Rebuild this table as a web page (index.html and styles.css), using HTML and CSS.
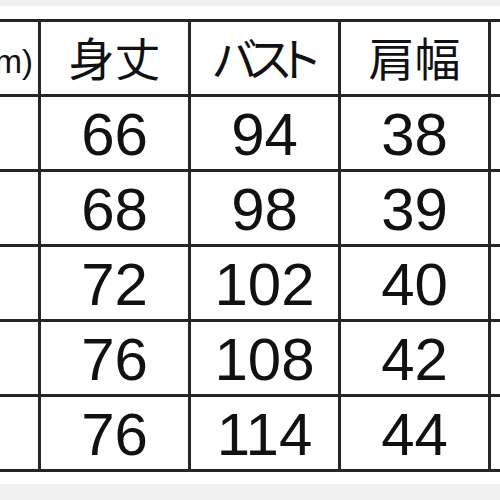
FILE: index.html
```html
<!DOCTYPE html>
<html lang="ja">
<head>
<meta charset="utf-8">
<link rel="stylesheet" href="styles.css">
</head>
<body>
<div class="band-top"></div>
<div class="sheet">
  <div class="cell label">m)</div>
  <div class="cell head">身丈</div>
  <div class="cell head kana">バスト</div>
  <div class="cell head">肩幅</div>
  <div class="cell"></div>

  <div class="cell"></div><div class="cell num">66</div><div class="cell num">94</div><div class="cell num">38</div><div class="cell"></div>
  <div class="cell"></div><div class="cell num">68</div><div class="cell num">98</div><div class="cell num">39</div><div class="cell"></div>
  <div class="cell"></div><div class="cell num">72</div><div class="cell num">102</div><div class="cell num">40</div><div class="cell"></div>
  <div class="cell"></div><div class="cell num">76</div><div class="cell num">108</div><div class="cell num">42</div><div class="cell"></div>
  <div class="cell"></div><div class="cell num">76</div><div class="cell num">114</div><div class="cell num">44</div><div class="cell"></div>
</div>
<div class="band-bottom"></div>
</body>
</html>
```

FILE: styles.css
```css
html, body {
  margin: 0;
  padding: 0;
  width: 500px;
  height: 500px;
  overflow: hidden;
  background: #ffffff;
}

.band-top {
  height: 6px;
  background: #f0f0f0;
}

.sheet {
  margin-top: 13px;
  margin-left: -109px;
  width: 750px;
  display: grid;
  grid-template-columns: 147px 147px 147px 147px 147px;
  grid-auto-rows: 72px;
  gap: 3px;
  padding: 3px 0;
  background: #262626;
}

.cell {
  background: #ffffff;
  display: flex;
  align-items: center;
  justify-content: center;
  color: #111111;
}

.label {
  justify-content: flex-end;
  padding-right: 5px;
  padding-top: 8px;
  font-family: "Liberation Sans", Arial, sans-serif;
  font-size: 33px;
}

.head {
  font-family: "Noto Sans CJK JP", sans-serif;
  font-size: 46px;
  padding-bottom: 4px;
}

.kana {
  font-feature-settings: "palt";
  letter-spacing: -7px;
  padding-right: 4px;
}

.num {
  font-family: "Liberation Sans", Arial, sans-serif;
  font-size: 60px;
  padding-top: 2px;
}

.band-bottom {
  margin-top: 12px;
  height: 20px;
  background: #f0f0f0;
}
```
